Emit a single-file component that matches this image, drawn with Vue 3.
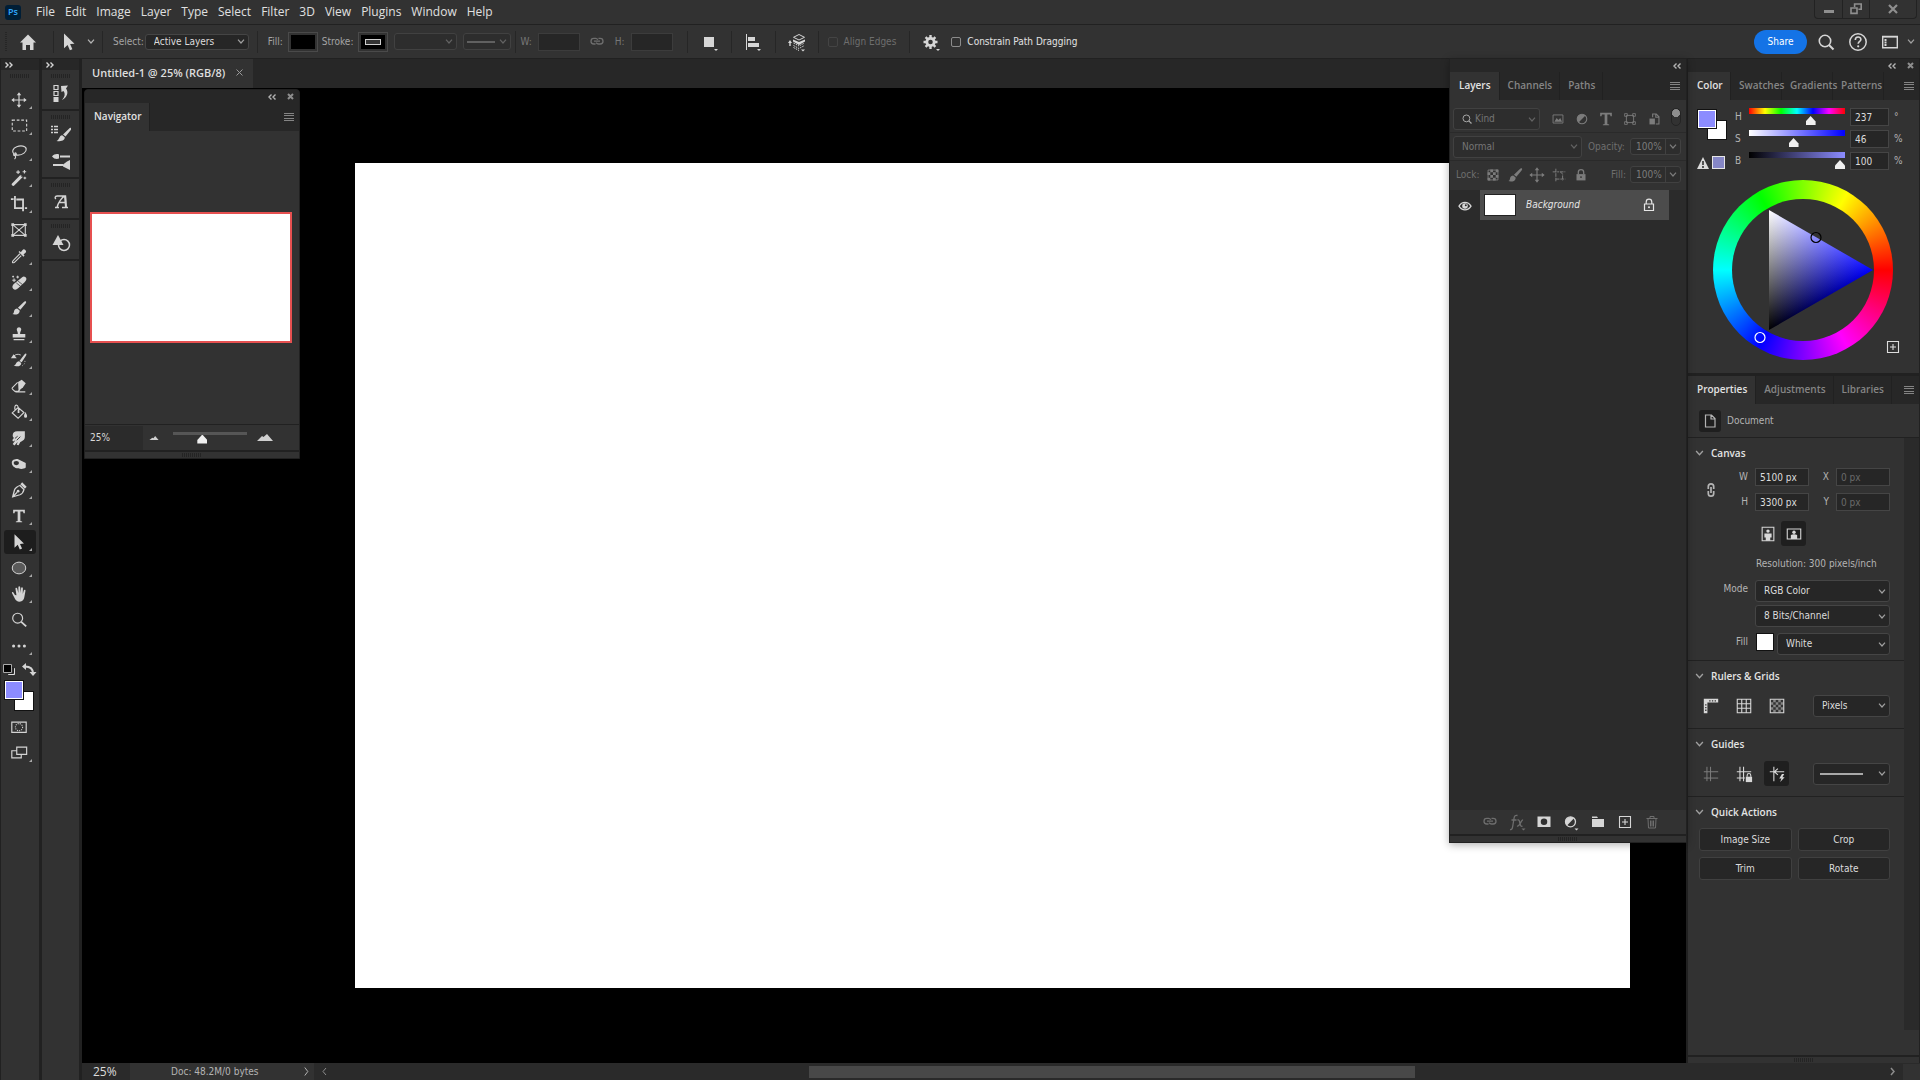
<template>
  <div class="app">
    <!-- menu bar -->
    <header class="menubar">
      <div class="ps-logo">Ps</div>
      <nav class="menus">
        <button v-for="m in menus" :key="m" class="menu">{{ m }}</button>
      </nav>
      <div class="window-buttons">
        <button class="win" aria-label="Minimize"><svg viewBox="0 0 12 12"><path d="M1 7h10v3H1z" fill="currentColor" /></svg></button>
        <button class="win" aria-label="Restore"><svg viewBox="0 0 12 12" fill="none" stroke="currentColor" stroke-width="1.6"><path d="M4.6 4V1h6.6v5.2H8.4M1 5h6v5.4H1z" /></svg></button>
        <button class="win win-close" aria-label="Close"><svg viewBox="0 0 12 12" fill="none" stroke="currentColor" stroke-width="2.2"><path d="M2 2l8 8M10 2l-8 8" /></svg></button>
      </div>
    </header>

    <!-- tool options -->
    <div class="options">
      <div class="grip-v"></div>
      <button class="icon-btn home" aria-label="Home"><svg class="ico" v-html="icons.home" v-bind="svg" /></button>
      <i class="sep"></i>
      <button class="icon-btn cursor" aria-label="Path Selection"><svg class="ico" v-html="icons.cursor" v-bind="svg" /></button>
      <svg class="chev" v-html="chevron" v-bind="chevSvg" />
      <i class="sep sep-select"></i>
      <label class="lbl" for="opt-select">Select:</label>
      <span class="select select-layers">
        <select id="opt-select"><option>Active Layers</option></select>
        <svg class="chev" v-html="chevron" v-bind="chevSvg" />
      </span>
      <i class="sep sep-fill"></i>
      <span class="lbl">Fill:</span>
      <button class="paint" aria-label="Fill"><span class="paint-fill"></span></button>
      <span class="lbl">Stroke:</span>
      <button class="paint" aria-label="Stroke"><span class="paint-fill"><i></i></span></button>
      <span class="select select-width off">
        <select disabled aria-label="Stroke width"><option></option></select>
        <svg class="chev" v-html="chevron" v-bind="chevSvg" />
      </span>
      <span class="select select-style off">
        <select disabled aria-label="Stroke style"><option></option></select>
        <hr />
        <svg class="chev" v-html="chevron" v-bind="chevSvg" />
      </span>
      <i class="sep sep-tight"></i>
      <label class="lbl dim" for="opt-w">W:</label>
      <input id="opt-w" class="field opt-field" disabled />
      <svg class="ico dim link" v-html="icons.link" v-bind="svg" />
      <label class="lbl dim" for="opt-h">H:</label>
      <input id="opt-h" class="field opt-field" disabled />
      <template v-for="b in optionButtons" :key="b">
        <i class="sep sep-op"></i>
        <button class="icon-btn op" :aria-label="b"><svg class="ico" v-html="icons[b]" v-bind="svg" /></button>
      </template>
      <i class="sep sep-op sep-check"></i>
      <label class="check dim"><input type="checkbox" disabled />Align Edges</label>
      <i class="sep sep-gear"></i>
      <button class="icon-btn gear" aria-label="Settings"><svg class="ico" v-html="icons.gear" v-bind="svg" /></button>
      <label class="check bright"><input type="checkbox" />Constrain Path Dragging</label>
      <div class="options-right">
        <button class="share">Share</button>
        <button class="icon-btn" aria-label="Search"><svg class="ico" v-html="icons.search" v-bind="svg" /></button>
        <button class="icon-btn" aria-label="Help"><svg class="ico" v-html="icons.help" v-bind="svg" /></button>
        <button class="icon-btn" aria-label="Workspace"><svg class="ico" v-html="icons.workspace" v-bind="svg" /></button>
        <svg class="chev" v-html="chevron" v-bind="chevSvg" />
      </div>
    </div>

    <div class="workspace">
      <!-- tools -->
      <aside class="rail tools">
        <div class="rail-head"><svg class="dbl" viewBox="0 0 8 6" v-html="dblRight" /></div>
        <div class="grip-h"></div>
        <button v-for="t in tools" :key="t.icon" class="tool" :class="{ active: t.icon === activeTool }" :aria-label="t.icon" @click="activeTool = t.icon">
          <svg class="ico" v-html="icons[t.icon]" v-bind="svg" />
          <i v-if="!t.single" class="corner"></i>
        </button>
        <div class="swap-row">
          <svg class="ico" v-html="icons.defaults" v-bind="svg" />
          <svg class="ico" v-html="icons.swap" v-bind="svg" />
        </div>
        <div class="swatches"><i class="bg"></i><i class="fg"></i></div>
        <button class="tool" aria-label="Quick Mask"><svg class="ico" v-html="icons.mask" v-bind="svg" /></button>
        <button class="tool" aria-label="Screen Mode"><svg class="ico" v-html="icons.screen" v-bind="svg" /><i class="corner"></i></button>
      </aside>

      <aside class="rail dock-icons">
        <div class="rail-head"><svg class="dbl" viewBox="0 0 8 6" v-html="dblRight" /></div>
        <div v-for="(group, i) in dockGroups" :key="i" class="dock-group">
          <div class="grip-h"></div>
          <button v-for="icon in group" :key="icon" class="dock-btn" :aria-label="icon"><svg class="ico" v-html="icons[icon]" v-bind="svg" /></button>
        </div>
      </aside>

      <div class="stage">
        <main class="document">
          <div class="doc-tabs">
            <div class="doc-tab">Untitled-1 @ 25% (RGB/8)<svg viewBox="0 0 7 7"><path d="M.5.5l6 6m0-6l-6 6" stroke="currentColor" /></svg></div>
          </div>
          <div class="viewport"><div class="page"></div></div>

          <!-- floating navigator -->
          <section class="float navigator">
            <div class="float-head"><svg class="dbl" viewBox="0 0 8 6" v-html="dblLeft" /><svg class="x" viewBox="0 0 7 7" v-html="cross" /></div>
            <div class="tabs"><button class="tab on">Navigator</button><svg class="burger" viewBox="0 0 10 8" v-html="burger" /></div>
            <div class="nav-body"><div class="thumb"></div></div>
            <div class="nav-zoom">
              <input class="nav-value" value="25%" aria-label="Zoom level" />
              <svg class="hill small" viewBox="0 0 16 7"><path d="M0 7l5-4 2 1 3-4 6 7z" fill="currentColor" /></svg>
              <input class="slider zoom" type="range" min="0" max="100" value="38" aria-label="Zoom" />
              <svg class="hill" viewBox="0 0 16 7"><path d="M0 7l5-5 1.500 1L10 0l6 7z" fill="currentColor" /></svg>
            </div>
            <div class="foot"><div class="grip-h"></div></div>
          </section>

          <!-- floating layers -->
          <section class="float layers">
            <div class="float-head"><svg class="dbl" viewBox="0 0 8 6" v-html="dblLeft" /></div>
            <div class="tabs">
              <button v-for="(t, i) in ['Layers', 'Channels', 'Paths']" :key="t" class="tab" :class="{ on: i === 0 }">{{ t }}</button>
              <svg class="burger" viewBox="0 0 10 8" v-html="burger" />
            </div>
            <div class="layer-row filter-row">
              <span class="select kind off">
                <svg class="ico" v-html="icons.search" v-bind="svg" />
                <select disabled aria-label="Filter"><option>Kind</option></select>
                <svg class="chev" v-html="chevron" v-bind="chevSvg" />
              </span>
              <svg v-for="f in filters" :key="f" class="ico" v-html="icons[f]" v-bind="svg" />
              <i class="toggle"></i>
            </div>
            <div class="layer-row">
              <span class="select blend off">
                <select disabled aria-label="Blend mode"><option>Normal</option></select>
                <svg class="chev" v-html="chevron" v-bind="chevSvg" />
              </span>
              <label class="dim" for="opacity">Opacity:</label>
              <span class="combo"><input id="opacity" value="100%" disabled /><svg class="chev" v-html="chevron" v-bind="chevSvg" /></span>
            </div>
            <div class="layer-row lock-row">
              <span class="dim">Lock:</span>
              <svg v-for="l in locks" :key="l" class="ico" v-html="icons[l]" v-bind="svg" />
              <label class="dim fill-label" for="lfill">Fill:</label>
              <span class="combo"><input id="lfill" value="100%" disabled /><svg class="chev" v-html="chevron" v-bind="chevSvg" /></span>
            </div>
            <div class="layer-list">
              <div class="layer">
                <svg class="ico eye" v-html="icons.eye" v-bind="svg" />
                <div class="layer-main">
                  <i class="layer-thumb"></i>
                  <em>Background</em>
                  <svg class="ico" v-html="icons.lockOutline" v-bind="svg" />
                </div>
              </div>
            </div>
            <div class="layer-actions">
              <button v-for="a in layerActions" :key="a.icon" :class="{ dim: a.off }" :aria-label="a.icon"><svg class="ico" v-html="icons[a.icon]" v-bind="svg" /></button>
            </div>
            <div class="foot"><div class="grip-h"></div></div>
          </section>
        </main>

        <!-- right dock -->
        <aside class="dock">
          <div class="float-head"><svg class="dbl" viewBox="0 0 8 6" v-html="dblLeft" /><svg class="x" viewBox="0 0 7 7" v-html="cross" /></div>
          <section class="color-panel">
            <div class="tabs color-tabs">
              <button v-for="(t, i) in ['Color', 'Swatches', 'Gradients', 'Patterns']" :key="t" class="tab" :class="{ on: i === 0 }">{{ t }}</button>
              <svg class="burger" viewBox="0 0 10 8" v-html="burger" />
            </div>
            <div class="hsb">
              <div class="hsb-left">
                <div class="swatches"><i class="bg"></i><i class="fg"></i></div>
                <div class="warn">
                  <svg viewBox="0 0 12 12"><path d="M6 0l6 12H0z" fill="#dcdcdc" /><path d="M6 4v4M6 9v2" stroke="#323232" stroke-width="1.600" /></svg>
                  <i></i>
                </div>
              </div>
              <div class="hsb-rows">
                <div v-for="c in channels" :key="c.name" class="hsb-row">
                  <label :for="'c' + c.name">{{ c.name }}</label>
                  <input class="slider" :class="c.track" type="range" min="0" :max="c.max" :value="c.value" :aria-label="c.track" />
                  <input :id="'c' + c.name" class="field" :value="c.value" />
                  <span>{{ c.unit }}</span>
                </div>
              </div>
            </div>
            <div class="wheel-area">
              <div class="wheel">
                <svg viewBox="0 0 180 180">
                  <defs>
                    <linearGradient id="tri-hue" gradientUnits="userSpaceOnUse" x1="56" y1="90" x2="160" y2="90"><stop stop-color="#000" /><stop offset="1" stop-color="#00f" /></linearGradient>
                    <linearGradient id="tri-white" gradientUnits="userSpaceOnUse" x1="108" y1="120" x2="56" y2="30"><stop stop-color="#000" /><stop offset="1" stop-color="#fff" /></linearGradient>
                  </defs>
                  <circle cx="90" cy="90" r="71" fill="#323232" />
                  <path d="M56 30l104 60L56 150z" fill="url(#tri-hue)" />
                  <path d="M56 30l104 60L56 150z" fill="url(#tri-white)" class="add" />
                  <circle cx="103" cy="57.500" r="5" fill="none" stroke="#000" stroke-width="1.200" />
                  <circle cx="47" cy="157.500" r="5" fill="none" stroke="#fff" stroke-width="1.200" />
                </svg>
              </div>
              <svg class="ico add-swatch" v-html="icons.plusBox" v-bind="svg" />
            </div>
          </section>

          <section class="properties">
            <div class="tabs">
              <button v-for="(t, i) in ['Properties', 'Adjustments', 'Libraries']" :key="t" class="tab" :class="{ on: i === 0 }">{{ t }}</button>
              <svg class="burger" viewBox="0 0 10 8" v-html="burger" />
            </div>
            <div class="doc-type"><span class="pressed"><svg class="ico" v-html="icons.page" v-bind="svg" /></span>Document</div>
            <div class="prop-scroll">
              <div class="prop-body">
                <div class="group">
                  <h3><svg class="chev" v-html="chevron" v-bind="chevSvg" />Canvas</h3>
                  <div class="dims">
                    <svg class="ico chain" v-html="icons.chain" v-bind="svg" />
                    <label for="pw">W</label><input id="pw" class="field" value="5100 px" />
                    <label for="px">X</label><input id="px" class="field" value="0 px" disabled />
                    <label for="ph">H</label><input id="ph" class="field" value="3300 px" />
                    <label for="py">Y</label><input id="py" class="field" value="0 px" disabled />
                  </div>
                  <div class="orient">
                    <button aria-label="Portrait"><svg class="ico" v-html="icons.portrait" v-bind="svg" /></button>
                    <button class="pressed" aria-label="Landscape"><svg class="ico" v-html="icons.landscape" v-bind="svg" /></button>
                  </div>
                  <p class="resolution">Resolution: 300 pixels/inch</p>
                  <div class="prop-row">
                    <label for="mode">Mode</label>
                    <span class="select"><select id="mode"><option>RGB Color</option></select><svg class="chev" v-html="chevron" v-bind="chevSvg" /></span>
                  </div>
                  <div class="prop-row">
                    <span class="row-label"></span>
                    <span class="select"><select aria-label="Depth"><option>8 Bits/Channel</option></select><svg class="chev" v-html="chevron" v-bind="chevSvg" /></span>
                  </div>
                  <div class="prop-row fill-row">
                    <label for="pfill">Fill</label>
                    <i class="white"></i>
                    <span class="select"><select id="pfill"><option>White</option></select><svg class="chev" v-html="chevron" v-bind="chevSvg" /></span>
                  </div>
                </div>
                <div class="group">
                  <h3><svg class="chev" v-html="chevron" v-bind="chevSvg" />Rulers &amp; Grids</h3>
                  <div class="icon-row">
                    <button v-for="r in ['ruler', 'grid', 'checker']" :key="r" :aria-label="r"><svg class="ico" v-html="icons[r]" v-bind="svg" /></button>
                    <span class="select"><select aria-label="Units"><option>Pixels</option></select><svg class="chev" v-html="chevron" v-bind="chevSvg" /></span>
                  </div>
                </div>
                <div class="group">
                  <h3><svg class="chev" v-html="chevron" v-bind="chevSvg" />Guides</h3>
                  <div class="icon-row">
                    <button class="dim" aria-label="Show guides"><svg class="ico" v-html="icons.guides" v-bind="svg" /></button>
                    <button aria-label="Lock guides"><svg class="ico" v-html="icons.guidesLock" v-bind="svg" /></button>
                    <button class="pressed" aria-label="Smart guides"><svg class="ico" v-html="icons.guidesSmart" v-bind="svg" /></button>
                    <span class="select line"><select aria-label="Guide style"><option></option></select><hr /><svg class="chev" v-html="chevron" v-bind="chevSvg" /></span>
                  </div>
                </div>
                <div class="group last">
                  <h3><svg class="chev" v-html="chevron" v-bind="chevSvg" />Quick Actions</h3>
                  <div class="actions">
                    <button v-for="q in ['Image Size', 'Crop', 'Trim', 'Rotate']" :key="q">{{ q }}</button>
                  </div>
                </div>
              </div>
              <div class="gutter"></div>
            </div>
          </section>
          <div class="foot"><div class="grip-h"></div></div>
        </aside>

        <!-- status bar -->
        <footer class="status">
          <span class="status-zoom">25%</span>
          <span class="status-doc">Doc: 48.2M/0 bytes<svg viewBox="0 0 5 9" fill="none" stroke="currentColor"><path d="M.8.5l3 4-3 4" /></svg></span>
          <svg class="arrow" viewBox="0 0 5 9" fill="none" stroke="currentColor"><path d="M4 1L1 4.500l3 3.500" /></svg>
          <div class="hscroll"><i></i></div>
          <svg class="arrow end" viewBox="0 0 5 9" fill="none" stroke="currentColor" stroke-width="1.500"><path d="M1 1l3 3.500L1 8" /></svg>
          <i class="resize"></i>
        </footer>
      </div>
    </div>
  </div>
</template>

<script setup>
import { ref } from 'vue'

const svg = { viewBox: '0 0 20 20', fill: 'none', stroke: 'currentColor' }
const chevSvg = { viewBox: '0 0 8 5', fill: 'none', stroke: 'currentColor' }
const chevron = '<path d="M1 .7l3 3.300 3-3.300" stroke-width="1.200"/>'
const dblRight = '<path d="M.5.5L3 3 .5 5.500M4.500.5L7 3 4.500 5.500" fill="none" stroke="currentColor" stroke-width="1.400"/>'
const dblLeft = '<path d="M3.500.5L1 3l2.500 2.500M7.500.5L5 3l2.500 2.500" fill="none" stroke="currentColor" stroke-width="1.400"/>'
const cross = '<path d="M1 1l5 5M6 1L1 6" fill="none" stroke="currentColor" stroke-width="2"/>'
const burger = '<path d="M0 .5h10M0 2.500h10M0 5.500h10M0 7.500h10" stroke="currentColor" stroke-width=".9"/>'

const menus = ['File', 'Edit', 'Image', 'Layer', 'Type', 'Select', 'Filter', '3D', 'View', 'Plugins', 'Window', 'Help']
const optionButtons = ['square', 'align', 'stack']
const activeTool = ref('cursor')

const tools = [
  { icon: 'move' },
  { icon: 'marquee' },
  { icon: 'lasso' },
  { icon: 'wand' },
  { icon: 'crop' },
  { icon: 'frame', single: true },
  { icon: 'eyedropper' },
  { icon: 'heal' },
  { icon: 'brush' },
  { icon: 'stamp' },
  { icon: 'historyBrush' },
  { icon: 'eraser' },
  { icon: 'bucket' },
  { icon: 'smudge' },
  { icon: 'dodge' },
  { icon: 'pen' },
  { icon: 'type' },
  { icon: 'cursor' },
  { icon: 'ellipse' },
  { icon: 'hand' },
  { icon: 'zoom', single: true },
  { icon: 'more' }
]

const dockGroups = [['history'], ['brushSettings', 'brushes'], ['glyphA'], ['shapes']]
const filters = ['image', 'adjust', 'type', 'shape', 'smart']
const locks = ['checkerLock', 'brush', 'move', 'artboard', 'lock']
const layerActions = [
  { icon: 'link', off: true },
  { icon: 'fx', off: true },
  { icon: 'addMask' },
  { icon: 'adjustMenu' },
  { icon: 'folder' },
  { icon: 'plusBox' },
  { icon: 'trash', off: true }
]

const channels = [
  { name: 'H', track: 'hue', max: 360, value: 237, unit: '°' },
  { name: 'S', track: 'saturation', max: 100, value: 46, unit: '%' },
  { name: 'B', track: 'brightness', max: 100, value: 100, unit: '%' }
]

const F = 'fill="currentColor" stroke="none"'
const squares = (x0, y0, n, s) => {
  let d = ''
  for (let y = 0; y < n; y++) {
    for (let x = 0; x < n; x++) if ((x + y) % 2) d += `M${x0 + x * s} ${y0 + y * s}h${s}v${s}h-${s}z`
  }
  return d
}
const brushShape = `<path d="M17.500 2.500c.8.600.5 1.500-.2 2.400L11.500 12 8.800 9.800l6.300-6.200c.8-.9 1.700-1.500 2.400-1.100zM8 10.500l2.700 2.300c.3 2-1 4-3.500 4.300-1.800.2-3.300.2-4.700-.4 1.600-.5 1.700-1.700 2-3.200.4-2 1.800-3 3.500-3z" ${F}/>`

const icons = {
  home: `<path d="M10 2.500L2 10.500h2.500V18H8v-5h4v5h3.500v-7.500H18z" ${F}/>`,
  cursor: `<path d="M5 1.500v14.800l3.600-3.200 2.300 5.200 2.500-1.100-2.300-5.100 4.400-.3z" ${F}/>`,
  link: '<path d="M8.500 12H6.800a2.800 2.800 0 010-5.600h1.700a2.600 2.600 0 012.300 1.400M11.500 6.400h1.700a2.800 2.800 0 010 5.600h-1.700a2.600 2.600 0 01-2.300-1.400M7 9.200h6" stroke-width="1.300"/>',
  square: `<path d="M5 5h10v10H5z" ${F}/><path d="M15 17h4l-2 2z" ${F}/>`,
  align: `<path d="M3.500 2v16" /><path d="M5 5h7v4H5zM5 11h11v4H5zM14 17h4l-2 2z" ${F}/>`,
  stack: `<path d="M12 2.500l5.500 2.800L12 8 6.500 5.300z"/><path d="M6 7.500L12 10l6-2.500v2L12 13 6 9.500zM1 11l2-3 2 3H3.700v3H2.300v-3zM14 17.500h4l-2 2z" ${F}/><path d="M6.500 11l5.500 3 5.500-3M6.500 13.500l5.500 3 5.500-3M6.500 15.500l5.500 3" stroke-dasharray="1.500 1"/>`,
  gear: `<circle cx="9.500" cy="10" r="3.700" stroke-width="2.800"/><path d="M9.500 3v3M9.500 14v3M2.500 10h3M13.500 10h3M4.600 5.100l2 2M12.400 12.900l2 2M14.400 5.100l-2 2M6.600 12.900l-2 2" stroke-width="2.400"/><path d="M15 17h4l-2 2z" ${F}/>`,
  search: '<circle cx="9" cy="9" r="5.700" stroke-width="1.600"/><path d="M13 13l4.500 4.500" stroke-width="2"/>',
  zoom: '<circle cx="8.500" cy="8" r="5.500" stroke-width="1.300"/><path d="M12.500 12l5.500 5" stroke-width="2"/>',
  help: `<circle cx="10" cy="10" r="8.200" stroke-width="1.500"/><path d="M7.300 8c0-3.800 5.600-3.800 5.600-.6 0 2-2.700 2.200-2.700 4.400" stroke-width="1.600"/><circle cx="10.200" cy="14.300" r="1.100" ${F}/>`,
  workspace: `<path d="M2.700 4.500h14.600v11.300H2.700z" stroke-width="1.400"/><path d="M4.500 7h2v2h-2zM4.500 9.500h2v2h-2zM4.500 12h2v2h-2zM2 4h16v1.500H2z" ${F}/>`,
  move: `<path d="M10 3v14M3 10h14" stroke-width="1.300"/><path d="M10 1.500l2.500 3.200h-5zM10 18.500l2.500-3.200h-5zM1.500 10l3.200-2.500v5zM18.500 10l-3.200-2.500v5z" ${F}/>`,
  marquee: '<path d="M2.500 3.500h16v12h-16z" stroke-width="1.200" stroke-dasharray="3 2"/>',
  lasso: '<path d="M4.500 12.500C1.500 10 3 6 7.500 4.200s10-1 10.500 2.300-4 7-9 7c-3.500 0-5-1.500-4.800-3M5.500 11c1.500 0 2 1.500 1 2.500s-2.800.5-2.500-1M5 13.500c1.800 1 1.500 3 0 4.500" stroke-width="1.300"/>',
  wand: `<path d="M2 16.300L11.800 6.500l2.400 2.400L4.400 18.700C3.500 19.500 1 17.500 2 16.300z" ${F}/><path d="M12 7.200l1.600 1.600" stroke="#323232"/><path d="M9 1.500v4M7 3.500h4M16 1v4M14 3h4M16.500 8.500v3M15 10h3" stroke-width="1.200"/>`,
  crop: '<path d="M5.500 1v13.500H15M1 4.500h3M7 5h7.500v13M16.500 14.500H19" stroke-width="2"/>',
  frame: `<path d="M3 4h14v12H3zM3 4l14 12M17 4L3 16" stroke-width="1.200"/><path d="M1.500 2.500h3v3h-3zM15.500 2.500h3v3h-3zM1.500 14.500h3v3h-3zM15.500 14.500h3v3h-3z" ${F}/>`,
  eyedropper: `<path d="M11 7.500L4 14.500c-1 1-1.500 2-1.200 2.700s1.700.3 2.700-.7l7-7" stroke-width="1.200"/><path d="M9.500 5.500l1.200-1 1.300 1.200 2-2.500c1.500-2 5 .8 3.500 3L15 8.200l1.200 1.200-1.200 1.300z" ${F}/>`,
  heal: `<path d="M11.500 6.500c2-2 3.500-3.500 5.500-2s1.500 3.500-.5 5.500L9 17c-2 2-4 2-5.500.5s-1-3.500 1-5.500z" ${F}/><path d="M9 9l5 4M7 11l5 4" stroke="#323232" stroke-width=".8"/><path d="M4.500 6v4M2.500 8h4M8.500 3v3M7 4.500h3M3.500 3v2M2.500 4h2" stroke-width="1.100"/>`,
  brush: brushShape,
  stamp: `<path d="M7.500 4.500a2.600 2.600 0 015 0c0 2-1.300 2.500-1.300 5.500H17v4H3v-4h5.700c0-3-1.200-3.500-1.200-5.500zM4 15.500h12V17H4z" ${F}/>`,
  historyBrush: `<path d="M18 3c.5.500.2 1.500-.5 2.500L13 12.500 10.500 11l5.500-7c.7-.8 1.500-1.300 2-1zM10 11.500l2.500 1.700c0 2.500-2 4-5.500 3.800-1 0-2-.2-3-.5 3-.5 2.500-5 6-5z" ${F}/><path d="M1 8l3-4.500L7.500 8z" ${F}/><path d="M4 6c2-2.500 5-3 8-1.500"/><path d="M16.500 11c.5 2-.5 4-3 5.500" stroke-dasharray="1 2"/>`,
  eraser: `<path d="M9 5.500L13 3l4.500 4-3 4.500-5 4z" ${F}/><path d="M8.500 6L3 11.500c-1 1-.8 1.500 0 2.200l2.500 2.300H9l2-2M6 16.500h11" stroke-width="1.200"/>`,
  bucket: `<path d="M9 5l6.500 5.500L9 17 2.500 11zM6 8c-1.500-3-.5-6 1.500-5.500S9.500 6 9.500 9" stroke-width="1.300"/><path d="M8.500 8h2v3h-2zM17 10c1.500 2.500 2 3.500 2 4.700a1.700 1.700 0 01-3.400 0c0-1.200.5-2.200 1.400-4.700z" ${F}/>`,
  smudge: `<path d="M3 7c0-3 2-4.500 5-4.500h8.500v6c0 4-3 4.500-5 6l-2 3.500-2-.5 1-3-3.500 3.800-2-1.500L6 12.500 3.500 14C2 13 3 11 4.500 10c-1-.5-1.500-1.500-1.500-3z" ${F}/><path d="M7.500 12.500l4-4M5.500 10.500l3-2.500" stroke="#323232"/>`,
  dodge: `<path d="M2 8.500C2 5.500 5 4.500 8.500 4.500l9 4.500v5c-2.500 2-6 2-8 .7-4 .3-7.500-2.700-7.500-6.200z" ${F}/><ellipse cx="7" cy="9" rx="3" ry="2.300" fill="#323232" stroke="none"/>`,
  pen: `<path d="M3 17.500l2-7.500c.5-2 4-4.500 6-5l4.500 4.500c-.5 2-2.500 5-4.500 5.800L3 17.500zm0 0l5-5" stroke-width="1.400"/><circle cx="9" cy="11.300" r="1.500" ${F}/><path d="M11.500 3.500l2-2 5 5-2 2z" ${F}/>`,
  type: `<path d="M3.500 3h13v4H15l-.5-2h-3v10.500l2 .5v1H6.500v-1l2-.5V5h-3L5 7H3.500z" ${F}/>`,
  ellipse: '<ellipse cx="10" cy="10" rx="7.500" ry="6.500" fill="#5a5a5a" stroke-width="1.100"/>',
  hand: `<path d="M5.500 11L4 8.500C3 7 1.500 8 2.300 9.300l3.200 6c1 2 2.500 3.200 5 3.200 3.500 0 5-2.500 5.500-5.500l1.200-6.500c.2-1.500-1.500-1.700-1.900-.3L14.200 10l.1-6.500c0-1.400-1.900-1.400-2 0L12 9l-.7-6.500c-.1-1.400-2-1.400-2 0V9L8 4c-.3-1.400-2.200-1-1.900.4l1.100 7.100z" ${F}/>`,
  more: `<circle cx="4" cy="10" r="1.700" ${F}/><circle cx="10" cy="10" r="1.700" ${F}/><circle cx="16" cy="10" r="1.700" ${F}/>`,
  defaults: '<path d="M9.500 8.500h6v6h-6z" fill="#fff" stroke="#ddd"/><path d="M8.500 7.500h6v6h-6z" fill="#323232" stroke="#222"/><path d="M4.500 4.500h8v8h-8z" fill="#000" stroke="#aaa"/>',
  swap: `<path d="M6 6.500c5 0 8 2 8 7" stroke-width="2"/><path d="M7 3v7L3 6.500zM10.500 12h7L14 16z" ${F}/>`,
  mask: '<path d="M2 4.500h16v11.500H2z" stroke-width="1.300"/><circle cx="10" cy="10.200" r="4" stroke-dasharray="1.200 1.200" stroke-width="1.200"/>',
  screen: '<path d="M7.500 3.500h11v8h-11zM7 7.500H2v8h10.500V12" stroke-width="1.300"/>',
  history: `<path d="M3 2.500h4v4H3zM3 8.500h4v4H3z" stroke-width="1.200"/><path d="M2.500 14h5v5h-5zM10 3l7-.5-2 3c3 4 1 9-4 11.500 3-3.500 3.500-6.500 1.500-9L10.500 9z" ${F}/>`,
  brushSettings: `<path d="M0 2.500h2M3 2.500h4M0 5.500h2M3 5.500h4M0 8.500h2M3 8.500h4" stroke-width="1.300"/><path d="M20 4c.6.600.4 1.300-.2 2L14.500 12.500 12 10.500l6-5.800c.7-.8 1.500-1.100 2-.7zM11.200 11.300l2.500 2c.2 2.500-2 4.700-8.200 3.700 3-.8 2.500-5.500 5.700-5.700z" ${F}/>`,
  brushes: `<path d="M9 5.500h10M2 14h10" stroke-width="2.200"/><path d="M1 5.500C3 3 6 2.500 8 3.500v4c-2 1-5 .5-7-2zM12 13.500l4-3 3-1.500v10l-3-1.500-4-2z" ${F}/>`,
  glyphA: `<path d="M4 15.500h4M11 15.500h6M6 4h8.500l.5 11.500M14 4C11 5 7 11 6 15.500M8 10.500h6.500M6 4c-2 .2-2.500 2-1 3" stroke-width="1.400"/><path d="M13 4h2l1 11.500h-2z" ${F}/>`,
  shapes: `<circle cx="13" cy="12" r="5.500" stroke-width="1.500"/><path d="M7 2l5.500 10H1.500z" ${F}/>`,
  image: `<path d="M4.500 5.500h11v9h-11z"/><path d="M6 13l2.500-4 2 2 2-2 2 4z" ${F}/>`,
  adjust: `<circle cx="10" cy="10" r="5.300" stroke-width="1.200"/><path d="M6.200 13.800A5.300 5.300 0 0113.800 6.200z" ${F}/>`,
  shape: `<path d="M6 6h8v8H6z"/><path d="M4 4h3v3H4zM13 4h3v3h-3zM4 13h3v3H4zM13 13h3v3h-3z" stroke-width=".9"/>`,
  smart: `<path d="M8.500 8V4.500h4l3 3v8H12M12 5v3h3" stroke-width="1.200"/><path d="M5 9.500h6V16H5z" ${F}/>`,
  checkerLock: `<path d="M4.500 4.500h11v11h-11z"/><path d="${squares(4, 4, 4, 3)}" ${F}/>`,
  artboard: '<path d="M6.500 3v14M3 6.500h7M11.500 6.500L14 9v7M6.500 14.500H17M11 6.500h6" stroke-width="1.100" stroke-dasharray="4 1"/>',
  lock: `<path d="M5 9h10v7H5z" ${F}/><path d="M7 9V7a3 3 0 016 0v2" stroke-width="1.400"/><circle cx="10" cy="12.300" r="1" fill="#323232" stroke="none"/>`,
  lockOutline: `<path d="M5.500 9h9v6.500h-9zM7.200 9V7a2.800 2.800 0 015.600 0v2" stroke-width="1.200"/><circle cx="10" cy="12.200" r="1" ${F}/>`,
  eye: `<path d="M4 10.200c3-5 9-5 12 0-3 5-9 5-12 0z" stroke-width="1.300"/><circle cx="10" cy="10" r="2.800" ${F}/><circle cx="10.800" cy="9.200" r="1" fill="#2b2b2b" stroke="none"/>`,
  fx: `<path d="M3 17.500c2.500.5 2.500-2 3-5l1-6C7.300 3.500 8.500 3 10.500 3.500M4.500 8h5M10.500 8c2-.5 2 1.500 2.500 3.500s1 3.500 2.500 2.500M16 8c-2-.5-3 7-6 6" stroke-width="1.300"/><path d="M14.500 16.500h4l-2 2z" ${F}/>`,
  addMask: `<path fill-rule="evenodd" d="M3.500 4.500h13v10.500h-13zM10 6.500a3.200 3.200 0 100 6.500 3.200 3.200 0 000-6.500z" ${F}/>`,
  adjustMenu: `<circle cx="9.500" cy="9.800" r="5" stroke-width="1.300"/><path d="M6 13.500A5 5 0 0113 6.300z" ${F}/><path d="M13.500 16.500h4l-2 2z" ${F}/>`,
  folder: `<path d="M4 4.500h5l1 1.500H4zM4 7h12v8H4z" ${F}/>`,
  plusBox: '<path d="M4.500 4.500h11v11h-11zM10 7v6M7 10h6" stroke-width="1.100"/>',
  trash: '<path d="M4.500 6.500h11M8 6V4.500h4V6M6 7l.5 9h7l.5-9M8.500 8.500v6M10 8.500v6M11.500 8.500v6"/>',
  page: '<path d="M5.500 4h6l3.500 3.500V16H5.500zM11 4v4h4" stroke-width="1.200"/>',
  chain: '<path d="M7.300 9V6.500a2.700 2.700 0 015.400 0V9M7.300 11v2.500a2.700 2.700 0 005.400 0V11M10 7v6" stroke-width="1.700"/>',
  portrait: `<path d="M3.500 2.500h13v15h-13z" stroke-width="1.200"/><circle cx="10" cy="6.800" r="1.900" ${F}/><path d="M6 9.500h8v4.500h-1.500v3.500h-5V14H6z" ${F}/>`,
  landscape: `<path d="M2.500 4.500h15v11h-15z" stroke-width="1.200"/><circle cx="10" cy="8" r="1.900" ${F}/><path d="M6.500 15.500v-4.500c2-1 5-1 7 0v4.500z" ${F}/>`,
  ruler: `<path fill-rule="evenodd" d="M2 2h16v4H6v12H2zM8 3.500V5h1.500V3.500zM11 3.500V5h1.500V3.500zM14 3.500V5h1.500V3.500zM3.500 8v1.500H5V8zM3.500 11v1.500H5V11zM3.500 14v1.500H5V14z" ${F}/>`,
  grid: '<path d="M2.500 2.500h15v15h-15zM7.500 2.500v15M12.500 2.500v15M2.500 7.500h15M2.500 12.500h15" stroke-width="1.200"/>',
  checker: `<path d="${squares(3, 3, 5, 2.8)}" fill="#858585" stroke="none"/><path d="M2.500 2.500h15v15h-15z" stroke-width="1.200"/>`,
  guides: '<path d="M5.500 2v16M9.500 2v16M2 7.500h16M2 14.500h16" stroke-width="1.100"/>',
  guidesLock: `<path d="M5.500 2v16M9.500 2v16M2 7.500h16M2 14.500h9" stroke-width="1.200"/><path d="M12 13h7v6h-7z" ${F}/><path d="M13.500 13v-1.500a2 2 0 014 0V13" stroke-width="1.200"/>`,
  guidesSmart: `<path d="M6.500 2v16M2 7.500h16M11 4L7 7.500l4 3.500" stroke-width="1.200"/><path d="M15.500 10l-3 5h2.500l-1.500 4 5-5.500h-2.500l2-3.500z" ${F}/>`
}
</script>

<style>
body {
  background: #222;
}
</style>

<style scoped>
.app {
  --panel: #323232;
  --dark: #272727;
  --line: #212121;
  --field: #262626;
  --edge: #454545;
  height: 100vh;
  display: flex;
  flex-direction: column;
  background: var(--line);
  color: #b4b4b4;
  font-family: "DejaVu Sans Condensed", "DejaVu Sans", sans-serif;
  font-size: 10px;
  line-height: 14px;
  overflow: hidden;
}

.app *,
.app *::before {
  box-sizing: border-box;
}

button,
input,
select {
  font: inherit;
  color: inherit;
  background: none;
  border: 0;
  padding: 0;
  margin: 0;
}

svg {
  display: block;
  flex: none;
}

.ico {
  width: 20px;
  height: 20px;
}

.chev {
  width: 8px;
  height: 5px;
}

.dim {
  color: #6e6e6e;
}

/* menu bar */
.menubar {
  height: 24px;
  display: flex;
  align-items: center;
  background: var(--panel);
  padding-left: 5px;
  flex: none;
}

.ps-logo {
  width: 16px;
  height: 15px;
  border-radius: 3px;
  background: #001e36;
  color: #31a8ff;
  font: 600 9px/14px "Open Sans", sans-serif;
  text-align: center;
}

.menus {
  display: flex;
  gap: 10px;
  padding-left: 15px;
}

.menu {
  font: 12px/18px "Open Sans", sans-serif;
  color: #e0e0e0;
}

.window-buttons {
  margin: 0 3px 0 auto;
  display: flex;
  align-self: flex-start;
  height: 19px;
  border: 1px solid #222;
  border-top: 0;
  border-radius: 0 0 4px 4px;
  color: #8f8f8f;
}

.win {
  width: 27px;
  display: flex;
  justify-content: center;
  align-items: center;
}

.win + .win {
  border-left: 1px solid #222;
}

.win-close {
  width: 47px;
}

.win svg {
  width: 12px;
  height: 12px;
}

/* options bar */
.options {
  height: 33px;
  margin: 1px 0;
  flex: none;
  display: flex;
  align-items: center;
  background: var(--panel);
}

.icon-btn {
  display: flex;
  color: #d6d6d6;
}

.grip-v {
  width: 2px;
  height: 20px;
  margin: 0 11px 0 5px;
  background: repeating-linear-gradient(#262626 0 1px, transparent 1px 2px);
}

.home {
  margin-right: 15px;
}

.sep {
  width: 1px;
  height: 22px;
  background: #262626;
}

.cursor {
  margin: 0 8px 0 5px;
}

.sep-select {
  margin: 0 10px 0 7px;
}

.lbl {
  color: #a4a4a4;
}

.lbl.dim {
  color: #777;
}

.select {
  display: grid;
  align-items: center;
}

.select > * {
  grid-area: 1 / 1;
}

.select select {
  appearance: none;
  width: 100%;
  height: 22px;
  padding-left: 8px;
  background: var(--field);
  border: 1px solid var(--edge);
  border-radius: 3px;
  color: #dcdcdc;
  opacity: 1;
}

.select .chev {
  justify-self: end;
  margin-right: 4px;
  color: #a0a0a0;
}

.select.off select {
  background: #2d2d2d;
  border-color: #414141;
  color: #757575;
}

.select.off .chev {
  color: #636363;
}

.select-layers {
  width: 104px;
  margin-left: 1px;
}

.select-layers select {
  height: 16px;
}

.sep-fill {
  margin: 0 10px 0 8px;
}

.paint {
  width: 30px;
  height: 20px;
  margin: 0 4px 0 5px;
  padding: 2px;
  border: 1px solid #4a4a4a;
}

.paint-fill {
  display: flex;
  align-items: center;
  justify-content: center;
  height: 14px;
  background: #000;
}

.paint-fill i {
  width: 16px;
  height: 6px;
  border: 1px solid #cfcfcf;
  background: #333;
}

.select-width {
  width: 63px;
  margin: 0 6px 0 2px;
}

.select-style {
  width: 48px;
}

.select-width select,
.select-style select {
  height: 17px;
}

hr {
  width: 28px;
  height: 2px;
  margin: 0 0 0 4px;
  border: 0;
  background: #606060;
}

.sep-tight {
  margin: 0 4px;
}

.field {
  height: 18px;
  background: var(--field);
  border: 1px solid var(--edge);
  padding-left: 4px;
  color: #dcdcdc;
}

.field:disabled {
  color: #6a6a6a;
}

.opt-field {
  width: 42px;
  margin-left: 6px;
  border-color: #3c3c3c;
}

.link {
  margin: 0 8px 0 7px;
}

.sep-op {
  margin: 0 11px 0 14px;
}

.op + .sep-op {
  margin-left: 12px;
}

.op + .sep-check {
  margin: 0 9px 0 11px;
}

.check {
  display: flex;
  align-items: center;
  gap: 6px;
}

.check input {
  appearance: none;
  width: 10px;
  height: 10px;
  border: 1px solid #8c8c8c;
  border-radius: 2px;
}

.check.dim input {
  border-color: #444;
}

.check.bright {
  color: #e2e2e2;
}

.sep-gear {
  margin: 0 11px 0 13px;
}

.gear {
  margin-right: 10px;
}

.options-right {
  margin: 0 5px 0 auto;
  display: flex;
  align-items: center;
  gap: 12px;
}

.options-right .chev {
  margin-left: -5px;
  color: #a0a0a0;
}

.share {
  width: 53px;
  height: 24px;
  margin-right: -3px;
  border-radius: 12px;
  background: #1473e6;
  color: #fff;
}

/* rails */
.workspace {
  flex: 1;
  min-height: 0;
  display: flex;
}

.rail {
  background: var(--panel);
  color: #d4d4d4;
  flex: none;
}

.tools {
  width: 38px;
  margin: 0 3px 0 1px;
}

.dock-icons {
  width: 37px;
  margin-right: 3px;
}

.rail-head {
  height: 11px;
  background: var(--dark);
  padding: 3px 0 0 4px;
}

.dbl {
  width: 8px;
  height: 6px;
}

.grip-h {
  width: 20px;
  height: 4px;
  margin: 4px auto;
  background: repeating-linear-gradient(90deg, #242424 0 1px, transparent 1px 2px);
}

.tools > .grip-h {
  margin-bottom: 10px;
}

.tool {
  position: relative;
  width: 32px;
  height: 24px;
  margin: 0 0 2px 3px;
  border-radius: 3px;
  display: flex;
  align-items: center;
  padding-left: 6px;
}

.tool .ico {
  width: 18px;
  height: 18px;
}

.tool.active {
  background: #1d1d1d;
}

.corner {
  position: absolute;
  right: 4px;
  bottom: 3px;
  border: solid #a8a8a8;
  border-width: 0 0 3px 3px;
  border-left-color: transparent;
}

.swap-row {
  display: flex;
  justify-content: space-between;
  margin: 0 4px 0 -2px;
}

.swatches {
  display: grid;
  width: 30px;
  height: 31px;
}

.swatches i {
  grid-area: 1 / 1;
  width: 20px;
  height: 20px;
  border: 1px solid #111;
}

.swatches .bg {
  background: #fff;
  place-self: end;
}

.swatches .fg {
  background: #8c8cff;
  box-shadow: inset 0 0 0 1px #fff;
}

.tools .swatches {
  margin: 0 0 4px 3px;
}

.dock-group {
  display: flow-root;
  border-bottom: 2px solid var(--line);
}

.dock-btn {
  display: flex;
  width: 37px;
  height: 27px;
  padding: 1px 0 0 9px;
}

/* stage */
.stage {
  flex: 1;
  min-width: 0;
  display: grid;
  grid-template-columns: minmax(0, 1fr) 234px;
  grid-template-rows: minmax(0, 1fr) 17px;
}

.document {
  position: relative;
  display: flex;
  flex-direction: column;
  background: #000;
}

.doc-tabs {
  height: 29px;
  background: var(--dark);
  display: flex;
}

.doc-tab {
  display: flex;
  align-items: center;
  gap: 11px;
  padding: 0 10px 2px;
  background: var(--panel);
  color: #dedede;
  font: 600 11px/26px "Open Sans", sans-serif;
}

.doc-tab svg {
  width: 7px;
  height: 7px;
  color: #999;
}

.viewport {
  flex: 1;
  display: flex;
}

.page {
  flex: 1;
  margin: 75px 56px 75px 273px;
  background: #fff;
}

/* floating panels */
.float {
  position: absolute;
  background: var(--panel);
  border: 1px solid var(--line);
}

.float-head {
  height: 13px;
  flex: none;
  background: var(--dark);
  display: flex;
  align-items: center;
  justify-content: flex-end;
  gap: 11px;
  padding-right: 5px;
}

.x {
  width: 7px;
  height: 7px;
  color: #8e8e8e;
}

.tabs {
  height: 28px;
  flex: none;
  display: flex;
  background: var(--dark);
  font: 600 10px/24px "Open Sans", sans-serif;
  color: #858585;
}

.tab {
  padding: 0 8px 2px 9px;
  border-right: 1px solid var(--line);
  flex: none;
}

.tab + .tab {
  padding: 0 7px 2px 8px;
}

.tab.on {
  background: var(--panel);
  color: #e2e2e2;
}

.burger {
  width: 10px;
  height: 8px;
  margin: 10px 5px 0 auto;
  color: #8e8e8e;
}

.foot {
  height: 8px;
  flex: none;
  border-top: 2px solid var(--line);
  overflow: hidden;
}

.foot .grip-h {
  margin: 1px auto;
}

.navigator {
  left: 2px;
  top: 30px;
  width: 216px;
  border-radius: 4px 4px 0 0;
  overflow: hidden;
}

.nav-body {
  height: 293px;
  padding: 81px 7px 0 5px;
}

.thumb {
  height: 131px;
  background: #fff;
  border: 2px solid #e65050;
}

.nav-zoom {
  display: flex;
  align-items: center;
  height: 26px;
  border-top: 1px solid var(--line);
  color: #d0d0d0;
}

.nav-value {
  width: 58px;
  height: 24px;
  padding-left: 5px;
  background: #2b2b2b;
  color: #d8d8d8;
}

.hill {
  width: 16px;
  height: 7px;
}

.hill.small {
  width: 10px;
  height: 4px;
  margin-left: 6px;
}

.slider {
  appearance: none;
  width: 96px;
  height: 18px;
}

.slider::-webkit-slider-runnable-track {
  height: 18px;
  background: var(--track) top / 100% 6px no-repeat;
}

.slider::-webkit-slider-thumb {
  appearance: none;
  width: 10px;
  height: 9px;
  margin-top: 8px;
  background: #f0f0f0;
  clip-path: polygon(50% 0, 100% 60%, 100% 100%, 0 100%, 0 60%);
}

.zoom {
  --track: linear-gradient(#565656, #565656);
  width: 74px;
  margin: 6px 10px 0 14px;
}

.zoom::-webkit-slider-runnable-track {
  background-size: 100% 3px;
}

.zoom::-webkit-slider-thumb {
  margin-top: 3px;
}

.hue {
  --track: linear-gradient(90deg, red, yellow, lime, cyan, blue, magenta, red);
}

.saturation {
  --track: linear-gradient(90deg, #fff, #00f);
}

.brightness {
  --track: linear-gradient(90deg, #000, #8c8cff);
}

/* layers */
.layers {
  right: -1px;
  top: -1px;
  width: 238px;
  height: 785px;
  display: flex;
  flex-direction: column;
  box-shadow: 0 2px 8px rgba(0, 0, 0, 0.3);
}

.layers .burger {
  margin-right: 6px;
}

.layer-row {
  height: 28px;
  flex: none;
  display: flex;
  align-items: center;
  padding-left: 3px;
  border-bottom: 1px solid #2a2a2a;
  color: #7c7c7c;
}

.filter-row {
  height: 33px;
  padding-top: 6px;
}

.kind {
  width: 87px;
  margin-right: 9px;
}

.kind select {
  padding-left: 21px;
}

.kind .ico {
  width: 12px;
  height: 12px;
  margin-left: 8px;
  z-index: 1;
  color: #aaa;
}

.filter-row > .ico {
  width: 18px;
  height: 18px;
  margin-right: 6px;
}

.toggle {
  width: 10px;
  height: 18px;
  margin: 0 0 4px 2px;
  border: 1px solid #242424;
  border-radius: 5px;
  background: radial-gradient(circle at 4px 4px, #8e8e8e 4px, transparent 4px);
}

.blend {
  width: 129px;
  margin-right: 6px;
}

.combo {
  display: flex;
  align-items: center;
  width: 51px;
  height: 17px;
  margin: 0 5px 0 auto;
  background: #2d2d2d;
  border: 1px solid #414141;
  border-radius: 3px;
}

.combo input {
  width: 35px;
  height: 15px;
  padding-left: 5px;
  border-right: 1px solid #414141;
  margin-right: 3px;
}

.lock-row {
  height: 29px;
  padding: 0 0 2px 6px;
  border: 0;
}

.lock-row > .ico {
  width: 18px;
  height: 18px;
  margin-left: 4px;
}

.fill-label {
  margin-left: auto;
}

.fill-label + .combo {
  margin-left: 4px;
}

.layer-list {
  flex: 1;
  background: #2b2b2b;
}

.layer {
  display: flex;
  height: 30px;
}

.eye {
  margin: 6px 5px;
  color: #d6d6d6;
}

.layer-main {
  flex: 1;
  margin-right: 17px;
  display: flex;
  align-items: center;
  gap: 10px;
  padding: 0 10px 0 4px;
  background: #4c4c4c;
  color: #e6e6e6;
}

.layer-thumb {
  width: 32px;
  height: 22px;
  background: #fff;
  border: 1px solid #222;
}

.layer-main .ico {
  margin-left: auto;
}

.layer-actions {
  height: 24px;
  display: flex;
  gap: 7px;
  align-items: center;
  padding-left: 30px;
  color: #d6d6d6;
}

/* right dock */
.dock {
  display: flex;
  flex-direction: column;
  padding: 0 1px 0 2px;
  background: var(--line);
}

.color-panel {
  background: var(--panel);
  flex: none;
  margin-bottom: 3px;
}

.color-tabs .tab {
  width: 51px;
  padding-right: 0;
  text-align: left;
}

.color-tabs .tab:first-child {
  width: 43px;
}

.hsb {
  display: flex;
  padding: 8px 0 0 9px;
}

.hsb-left {
  width: 38px;
  padding-top: 1px;
}

.warn {
  display: flex;
  gap: 3px;
  align-items: center;
  margin-top: 16px;
}

.warn svg {
  width: 12px;
  height: 12px;
}

.warn i {
  width: 13px;
  height: 13px;
  background: #8687c6;
  border: 1px solid #e6e6e6;
}

.hsb-row {
  display: flex;
  align-items: center;
  height: 18px;
  margin-bottom: 4px;
}

.hsb-row label {
  width: 14px;
}

.hsb-row .field {
  width: 39px;
  margin: 0 5px;
}

.wheel-area {
  display: flex;
  align-items: flex-end;
  height: 199px;
  padding: 0 0 13px 25px;
}

.wheel {
  width: 180px;
  height: 180px;
  border-radius: 50%;
  background: conic-gradient(from 90deg, red, magenta, blue, cyan, lime, yellow, red);
}

.wheel svg {
  isolation: isolate;
}

.add {
  mix-blend-mode: plus-lighter;
}

.add-swatch {
  margin: 0 0 3px -10px;
  color: #ddd;
}

.properties {
  flex: 1;
  min-height: 0;
  display: flex;
  flex-direction: column;
  background: var(--panel);
}

.doc-type {
  display: flex;
  align-items: center;
  gap: 6px;
  height: 34px;
  flex: none;
  padding: 1px 0 0 11px;
  border-bottom: 1px solid var(--line);
}

.pressed {
  background: #1f1f1f;
  border-radius: 3px;
}

.doc-type .pressed {
  width: 22px;
  height: 22px;
  padding: 1px;
}

.prop-scroll {
  flex: 1;
  display: flex;
  min-height: 0;
}

.prop-body {
  flex: 1;
}

.gutter {
  width: 16px;
  margin-bottom: 25px;
  background: #2a2a2a;
}

.group {
  border-bottom: 1px solid var(--line);
  padding: 8px 14px 10px 7px;
}

.group.last {
  border: 0;
}

h3 {
  display: flex;
  align-items: center;
  gap: 7px;
  margin: 0;
  font: 600 10px/14px "Open Sans", sans-serif;
  color: #e4e4e4;
}

h3 .chev {
  width: 9px;
  height: 6px;
  color: #a0a0a0;
}

.dims {
  display: grid;
  grid-template-columns: 18px 42px 54px 27px 54px;
  row-gap: 7px;
  align-items: center;
  margin-top: 8px;
}

.dims label {
  text-align: right;
  padding-right: 7px;
}

.chain {
  grid-row: 1 / 3;
  margin-left: 6px;
}

.orient {
  display: flex;
  gap: 1px;
  margin: 10px 0 0 60px;
}

.orient button {
  width: 25px;
  height: 25px;
  display: grid;
  place-items: center;
}

.orient .ico {
  width: 18px;
  height: 18px;
}

.orient,
.icon-row {
  color: #d8d8d8;
}

.resolution {
  margin: 11px 0 9px 61px;
}

.prop-row {
  display: flex;
  margin-bottom: 3px;
}

.prop-row label,
.row-label {
  width: 60px;
  padding: 2px 7px 0 0;
  text-align: right;
}

.prop-row .select {
  flex: 1;
}

.fill-row {
  margin: 6px 0 -5px;
}

.white {
  width: 18px;
  height: 18px;
  margin: 0 3px 0 1px;
  background: #fff;
  border: 1px solid #111;
}

.icon-row {
  display: flex;
  align-items: center;
  gap: 8px;
  margin-top: 10px;
  padding-left: 3px;
}

.icon-row button {
  width: 25px;
  height: 25px;
  display: grid;
  place-items: center;
}

.icon-row .ico {
  width: 18px;
  height: 18px;
}

.icon-row .select {
  width: 77px;
  margin-left: auto;
}

.line hr {
  width: 43px;
  margin-left: 7px;
  background: #a8a8a8;
}

.icon-row .dim {
  color: #7c7c7c;
}

.actions {
  display: grid;
  grid-template-columns: 1fr 1fr;
  gap: 6px;
  margin: 9px 0 0 4px;
}

.actions button {
  height: 23px;
  background: var(--field);
  border: 1px solid #404040;
  border-radius: 3px;
  color: #dcdcdc;
}

.dock > .foot {
  background: var(--panel);
}

/* status bar */
.status {
  grid-column: 1 / 3;
  display: flex;
  align-items: center;
  background: #2a2a2a;
}

.status-zoom {
  width: 48px;
  padding-left: 11px;
  font: 12px/17px "Open Sans", sans-serif;
  color: #dcdcdc;
}

.status-doc {
  width: 184px;
  height: 17px;
  display: flex;
  align-items: center;
  justify-content: space-between;
  padding: 0 5px 0 41px;
  background: var(--panel);
}

.status svg {
  width: 5px;
  height: 9px;
}

.status .arrow {
  margin-left: 8px;
  color: #8c8c8c;
}

.hscroll {
  flex: 1;
}

.hscroll i {
  display: block;
  width: 39%;
  height: 12px;
  margin-left: 31%;
  background: #484848;
}

.status .end {
  margin: 0 8px;
}

.resize {
  width: 17px;
  height: 16px;
  background: var(--panel);
}
</style>
